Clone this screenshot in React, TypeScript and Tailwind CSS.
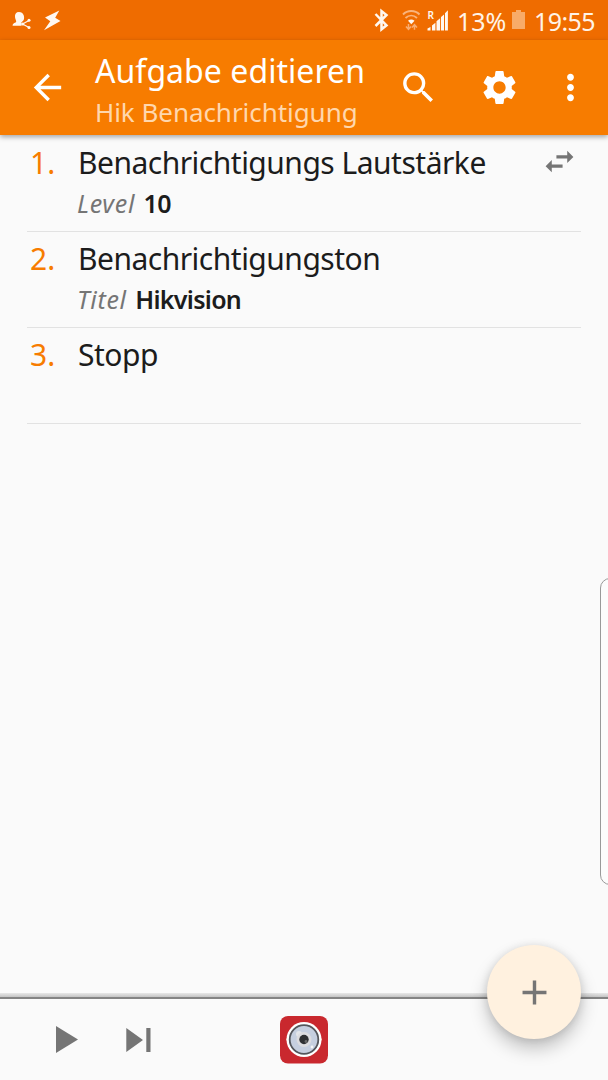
import { MdAdd, MdArrowBack, MdMoreVert, MdSearch, MdSettings, MdSwapHoriz } from "react-icons/md"

const actions = [
  { title: "Benachrichtigungs Lautstärke", label: "Level", value: "10", swap: true },
  { title: "Benachrichtigungston", label: "Titel", value: "Hikvision", swap: false },
  { title: "Stopp", label: "", value: "", swap: false },
]

function StatusBar() {
  return (
    <div className="flex h-10 shrink-0 items-center bg-[#ef6c00] text-[25px] leading-10 text-[#fff3e6]">
      <svg className="ml-3 h-10 w-[51px]" viewBox="12 0 51 40" fill="#fff8f0">
        <path d="M19 12c-3 0-4.300 2-4 5 .2 2.500 1.300 3.300 1.200 4.600-.1 1.500-3.600 1.400-3.600 4.200h8.900l-.3-3 2.500-2.800c.6-1.500.5-3.500-.1-5C22.800 13 21.300 12 19 12z" />
        <path d="M29 20.500l-6.500 3.500 6.500 3.500" fill="none" stroke="#fff8f0" strokeWidth="1.200" />
        <circle cx="29" cy="20.200" r="1.500" />
        <circle cx="22.700" cy="24" r="1.600" />
        <circle cx="29" cy="27.600" r="1.500" />
        <path d="M59.300 10.500L45 17.500l5.300 3.800-6.300 8.900L60.500 21l-5.300-3.200z" />
      </svg>
      <svg className="ml-[311px] h-10 w-[76px]" viewBox="374 0 76 40">
        <path d="M375.500 14l11 11.300-5 4V11l5 4-11 11" fill="none" stroke="#fff8f0" strokeWidth="2.500" />
        <g fill="none" stroke="#f9b47c" strokeWidth="1.900">
          <path d="M403 14.500c4.500-4.600 12-4.600 16.500 0M405.500 18c3.500-3.200 8-3.200 11.500 0" />
        </g>
        <path d="M408 20.800c2-1.700 4.500-1.700 6.500 0l-3.200 3.400z" fill="#fff8f0" />
        <path d="M408.500 24v5M406 26.500l2.500 2.800 2.500-2.800M414.500 29.800v-5M412 27.500l2.500-2.800 2.500 2.800" fill="none" stroke="#f9ac70" strokeWidth="1.500" />
        <path d="M427.500 30.500v-2l3-1.500v3.500zM432 30.500v-5l3.400-2.800v7.800zM436.500 30.500v-9.300l3.600-2.900v12.200zM441 30.500V17l3-2.500v16zM445 30.500V13.200l2.900-3v20.300z" fill="#fff8f0" />
        <text x="427.500" y="18.500" fill="#fff8f0" fontSize="10" fontWeight="600">R</text>
      </svg>
      <span className="mt-0.5 ml-[7px] w-[50px]">13%</span>
      <svg className="ml-[5px] h-10 w-[14px]" viewBox="0 0 14 40" fill="#f8ab68">
        <path d="M4 10h5v2h4v17H0V12h4z" />
      </svg>
      <span className="mt-0.5 ml-[8px] tracking-[-0.600px]">19:55</span>
    </div>
  )
}

function Header() {
  return (
    <header className="relative flex h-[95px] shrink-0 bg-[#f77c00] text-white shadow-[0_2px_5px_rgba(0,0,0,0.350)]">
      <MdArrowBack className="mt-[27px] ml-[27px] size-[41px]" />
      <div className="ml-[27px] w-[302px] pt-[11px] whitespace-nowrap">
        <h1 className="h-10 text-[32px] leading-10 tracking-[0.050px]">Aufgabe editieren</h1>
        <p className="text-[26px] leading-[42px] tracking-[-0.050px] text-[#ffd7ad]">Hik Benachrichtigung</p>
      </div>
      <MdSearch className="mt-[27px] ml-[1px] size-[41px]" />
      <MdSettings className="mt-[27px] ml-[40px] size-[41px]" />
      <MdMoreVert className="mt-[27px] ml-[30px] size-[41px]" />
    </header>
  )
}

function ControlBar() {
  return (
    <footer className="relative flex h-[88px] shrink-0 flex-col">
      <div className="mt-px h-[4px] bg-linear-to-b from-[#e8e8e8] to-[#c4c4c4]" />
      <div className="h-[2px] bg-[#848484]" />
      <div className="flex flex-1 items-center">
        <svg className="ml-14 h-[27px] w-[22px]" viewBox="0 0 22 27" fill="#757575">
          <path d="M0 0v27l22-13.500z" />
        </svg>
        <svg className="ml-12 h-[24px] w-[25px]" viewBox="0 0 25 24" fill="#757575">
          <path d="M.3 0v24L17 12zM20.300 0h4.200v24h-4.200z" />
        </svg>
        <svg className="ml-[129px] size-12" viewBox="0 0 48 48">
          <rect width="48" height="47.500" rx="8" fill="#c9282e" />
          <path d="M6 23.500h36" stroke="#e8a080" strokeWidth="2" />
          <circle cx="24" cy="23.500" r="17.500" fill="#fff" />
          <circle cx="24" cy="23.500" r="14.300" fill="#c6cfdf" stroke="#54565b" strokeWidth="1.800" />
          <circle cx="19" cy="18" r="3" fill="#e3e5e9" />
          <circle cx="24" cy="23.500" r="7.500" fill="#dcdcdf" />
          <circle cx="24" cy="23.500" r="4.700" fill="#2f3032" />
          <circle cx="26" cy="25.500" r="1.400" fill="#686868" />
          <circle cx="32" cy="31" r="1.400" fill="#f5f5f5" />
        </svg>
      </div>
      <button className="absolute -top-[47px] left-[487px] flex size-[94px] items-center justify-center rounded-full bg-[#fff1df] text-[#757575] shadow-[0_10px_18px_rgba(0,0,0,0.220),0_1px_8px_rgba(0,0,0,0.120)]">
        <MdAdd className="size-[41px]" />
      </button>
    </footer>
  )
}

export default function App() {
  return (
    <div className="relative flex h-[1080px] w-[608px] flex-col overflow-hidden bg-[#fafafa] font-['Noto_Sans',sans-serif]">
      <StatusBar />
      <Header />
      <main className="flex-1 px-[27px] pt-px">
        {actions.map((action, index) => (
          <div key={action.title} className="flex h-24 border-b border-[#e2e2e2] pt-[7px] whitespace-nowrap">
            <span className="w-[51px] pl-[3px] text-[30px] leading-10 text-[#f77c00]">{index + 1}.</span>
            <div className="flex-1">
              <h2 className="text-[30px] leading-10 tracking-[-0.500px] text-[#1c1c1c]">{action.title}</h2>
              {action.label && (
                <p className="-ml-px text-[25px] leading-10 text-[#757575]">
                  <span className="mr-0.5 tracking-[0.700px] italic">{action.label}</span>{" "}
                  <span className="font-semibold tracking-[-0.700px] text-[#1c1c1c]">{action.value}</span>
                </p>
              )}
            </div>
            {action.swap && <MdSwapHoriz className="mr-[3px] size-[37px] text-[#757575]" />}
          </div>
        ))}
      </main>
      {/* edge panel handle */}
      <div className="absolute top-[578px] left-[600px] h-[307px] w-5 rounded-xl border border-[#999] bg-[#fcfcfc]" />
      <ControlBar />
    </div>
  )
}
